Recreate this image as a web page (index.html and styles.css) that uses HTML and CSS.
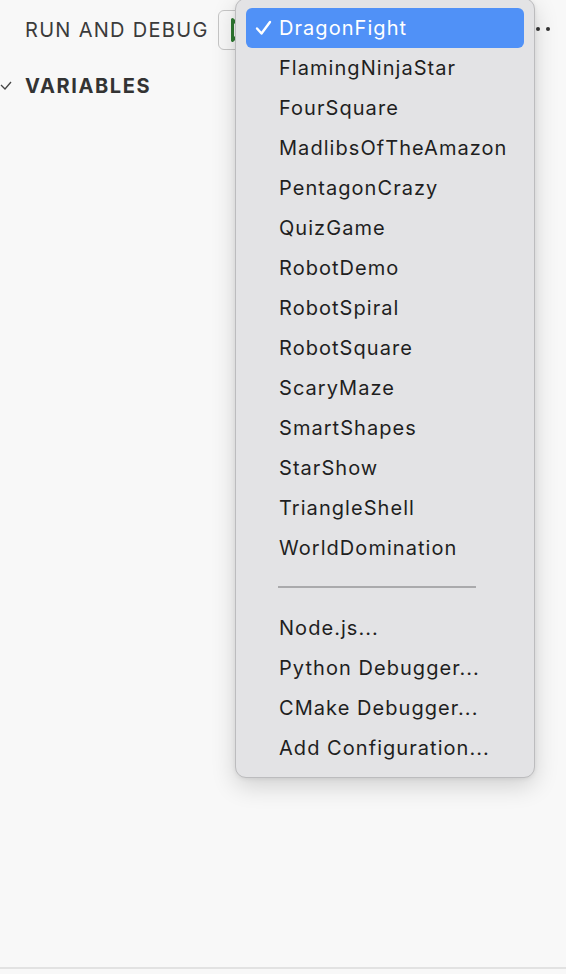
FILE: index.html
```html
<!DOCTYPE html>
<html>
<head>
<meta charset="utf-8">
<link rel="stylesheet" href="styles.css">
</head>
<body>
<div class="app">
  <header class="toolbar">
    <span class="title">RUN AND DEBUG</span>
    <div class="config-btn">
      <svg class="play" width="14" height="24" viewBox="0 0 14 24"><path d="M1.5 1.5 L12 12 L1.5 22.5 Z" fill="none" stroke="#2f7a32" stroke-width="3" stroke-linejoin="round"/></svg>
    </div>
    <svg class="more" width="30" height="6" viewBox="0 0 30 6"><circle cx="6" cy="3" r="2" fill="#333"/><circle cx="16" cy="3" r="2" fill="#333"/><circle cx="26" cy="3" r="2" fill="#333"/></svg>
  </header>
  <section class="section">
    <svg class="chev" width="12" height="10" viewBox="0 0 12 10"><path d="M1 4 L5 8 L11 1" fill="none" stroke="#444" stroke-width="1.3"/></svg>
    <span class="section-title">VARIABLES</span>
  </section>
  <div class="spacer"></div>
  <div class="footer-line"></div>

  <div class="menu">
    <div class="item selected"><svg class="check" width="17" height="16" viewBox="0 0 17 16"><path d="M2 8.5 L6.5 13.5 L15 2" fill="none" stroke="#fff" stroke-width="2.4" stroke-linecap="round" stroke-linejoin="round"/></svg>DragonFight</div>
    <div class="item">FlamingNinjaStar</div>
    <div class="item">FourSquare</div>
    <div class="item">MadlibsOfTheAmazon</div>
    <div class="item">PentagonCrazy</div>
    <div class="item">QuizGame</div>
    <div class="item">RobotDemo</div>
    <div class="item">RobotSpiral</div>
    <div class="item">RobotSquare</div>
    <div class="item">ScaryMaze</div>
    <div class="item">SmartShapes</div>
    <div class="item">StarShow</div>
    <div class="item">TriangleShell</div>
    <div class="item">WorldDomination</div>
    <div class="item sep-row"><div class="sep"></div></div>
    <div class="item">Node.js...</div>
    <div class="item">Python Debugger...</div>
    <div class="item">CMake Debugger...</div>
    <div class="item">Add Configuration...</div>
  </div>
</div>
</body>
</html>
```

FILE: styles.css
```css
* { box-sizing: border-box; }
html, body {
  margin: 0;
  padding: 0;
  background: #f8f8f8;
}
body {
  font-family: Inter, "Noto Sans", "Liberation Sans", sans-serif;
  color: #3b3b3b;
  width: 566px;
  height: 974px;
  overflow: hidden;
}
.app {
  position: relative;
  height: 974px;
  display: flex;
  flex-direction: column;
}
.toolbar {
  height: 60px;
  display: flex;
  align-items: center;
  padding-left: 25px;
}
.title {
  font-size: 20px;
  letter-spacing: 1.3px;
  color: #3b3b3b;
  width: 193px;
}
.config-btn {
  width: 60px;
  height: 40px;
  border: 1.5px solid #c6c6c6;
  border-radius: 6px;
  display: flex;
  align-items: center;
  padding-left: 12px;
}
.more {
  margin-left: 244px;
  margin-top: -2px;
}
.section {
  height: 52px;
  display: flex;
  align-items: center;
}
.chev {
  width: 12px;
  margin-right: 13px;
}
.section-title {
  font-size: 20px;
  font-weight: 700;
  letter-spacing: 1.6px;
  color: #333;
}
.spacer { flex: 1; }
.footer-line {
  height: 2px;
  background: #e2e2e2;
  margin-bottom: 5px;
}
.menu {
  position: absolute;
  left: 235px;
  top: -2px;
  width: 300px;
  height: 780px;
  background: #e3e3e5;
  border: 1px solid #bcbcbe;
  border-radius: 11px;
  padding: 9px 10px 8px 10px;
  box-shadow: 0 8px 24px rgba(0,0,0,0.16), 0 1px 4px rgba(0,0,0,0.08);
}
.item {
  height: 40px;
  display: flex;
  align-items: center;
  padding-left: 33px;
  font-size: 20px;
  letter-spacing: 1.05px;
  color: #1f1f1f;
  border-radius: 6px;
  position: relative;
}
.item.selected {
  background: #5091f7;
  color: #fff;
}
.check {
  position: absolute;
  left: 9px;
  top: 12px;
}
.sep {
  width: 198px;
  height: 2px;
  background: #aaaaac;
  margin-left: -1px;
  margin-top: 18px;
}
.sep-row { align-items: flex-start; }
```
